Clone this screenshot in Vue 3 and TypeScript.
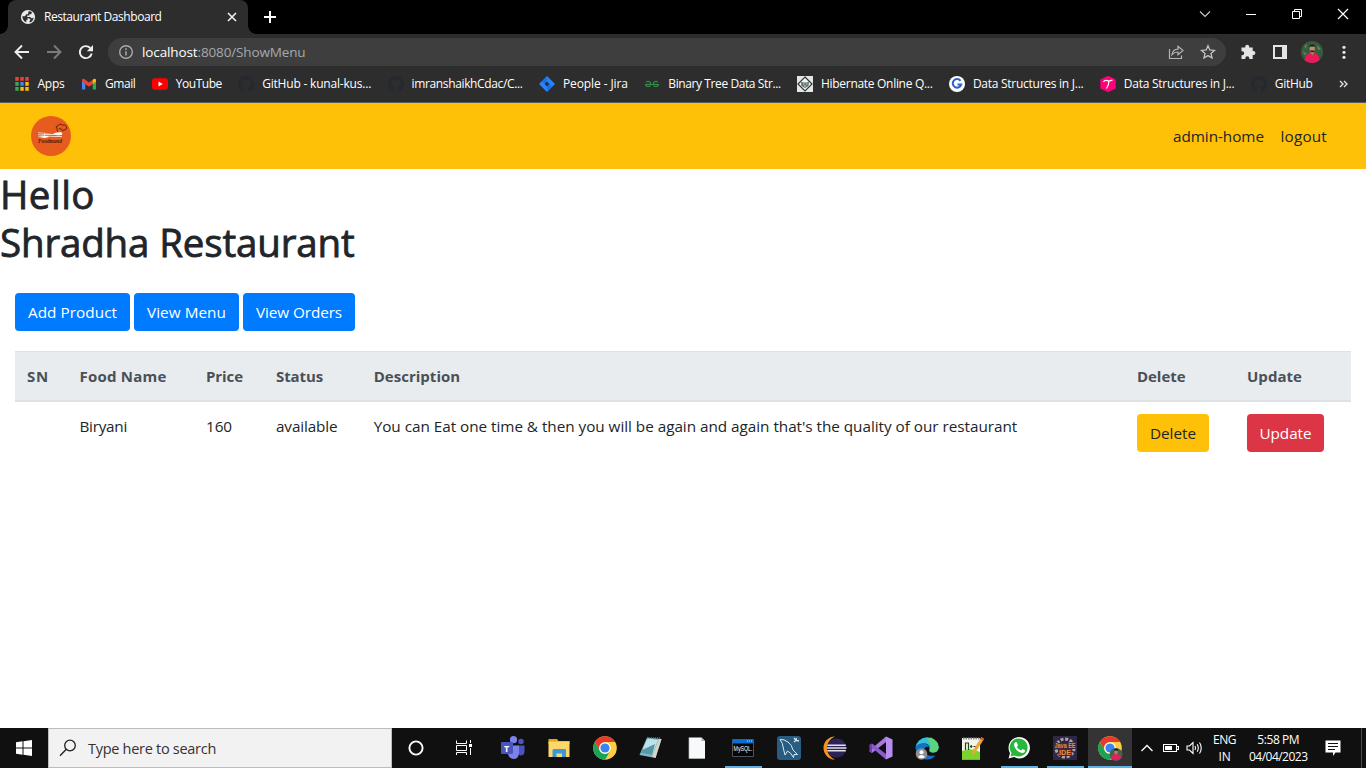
<script setup lang="ts">
interface Bookmark {
  icon: string
  label: string
  width: number
}

const bookmarks: Bookmark[] = [
  { icon: 'apps', label: 'Apps', width: 27 },
  { icon: 'gmail', label: 'Gmail', width: 30.5 },
  { icon: 'youtube', label: 'YouTube', width: 46 },
  { icon: 'github', label: 'GitHub - kunal-kus...', width: 109 },
  { icon: 'github', label: 'imranshaikhCdac/C...', width: 111 },
  { icon: 'jira', label: 'People - Jira', width: 65 },
  { icon: 'gfg', label: 'Binary Tree Data Str...', width: 112.3 },
  { icon: 'hibernate', label: 'Hibernate Online Q...', width: 111.5 },
  { icon: 'g', label: 'Data Structures in J...', width: 110.5 },
  { icon: 't', label: 'Data Structures in J...', width: 110.5 },
  { icon: 'github', label: 'GitHub', width: 38 },
]

const dots = [
  '#ea4335', '#ea4335', '#ea4335',
  '#34a853', '#4285f4', '#fbbc05',
  '#34a853', '#fbbc05', '#fbbc05',
]

const buttons = [
  { label: 'Add Product', width: 89 },
  { label: 'View Menu', width: 79 },
  { label: 'View Orders', width: 86 },
]

const columns = [
  { key: 'sn', label: 'SN', width: 22 },
  { key: 'name', label: 'Food Name', width: 87 },
  { key: 'price', label: 'Price', width: 37 },
  { key: 'status', label: 'Status', width: 47 },
  { key: 'desc', label: 'Description', width: 86.5 },
  { key: 'delete', label: 'Delete', width: 48.5 },
  { key: 'update', label: 'Update', width: 55 },
]

const apps = [
  'teams', 'explorer', 'chrome', 'notepad', 'file', 'mysql', 'workbench',
  'eclipse', 'vs', 'edge', 'npp', 'whatsapp', 'javaee', 'chromeuser',
]
const running = ['mysql', 'whatsapp', 'javaee', 'chromeuser']

// Spreads a label over the given width by adjusting its tracking.
const vFit = {
  mounted(el: HTMLElement, binding: { value: number }) {
    const count = (el.textContent ?? '').length
    const natural = el.getBoundingClientRect().width
    el.style.letterSpacing = `${(binding.value - natural) / count}px`
    el.style.width = `${binding.value}px`
  },
}
</script>

<template>
  <div class="screen">
    <div class="titlebar">
      <div class="tab">
        <svg class="globe" width="16" height="16" viewBox="0 0 16 16">
          <circle cx="8" cy="8" r="7.1" fill="#e8eaed" />
          <path d="M2.300 7.300 H5.200 L7.600 9.400 V11 H6.300 V13.300 Q2.500 12 2.300 7.300Z M8.600 2.300 Q11 2.200 12 3.500 L11 5.200 H9.300 V6.600 H7.200 V8 H10.200 L11.800 9.400 L13.600 8.500 Q13.400 12.200 10 13.500 L9.400 12.200 L10.600 10.800 L9 9.300 H7.600 L5 7.200 L6.200 5.200 H8Z" fill="#2d2d2d" />
        </svg>
        <span v-fit="117.5" class="t tab-title">Restaurant Dashboard</span>
        <svg class="tab-close" width="10" height="10" viewBox="0 0 10 10"><path d="M1 1 L9 9 M9 1 L1 9" stroke="#f1f1f1" stroke-width="1.6" /></svg>
        <i class="foot left"></i><i class="foot right"></i>
      </div>
      <svg class="newtab" width="12" height="12" viewBox="0 0 12 12"><path d="M6 0 V12 M0 6 H12" stroke="#fff" stroke-width="2" /></svg>
      <div class="winctl">
        <svg width="46" height="28" viewBox="0 0 46 28"><path d="M18 11.5 L23 16.5 L28 11.5" fill="none" stroke="#ccc" stroke-width="1.1" /></svg>
        <svg width="46" height="28" viewBox="0 0 46 28"><path d="M18 14.5 H28" stroke="#fff" /></svg>
        <svg width="46" height="28" viewBox="0 0 46 28"><path d="M18.5 11.5 H25.5 V18.5 H18.5Z M20.5 11 V9.5 H27.500 V16.5 H26" fill="none" stroke="#fff" /></svg>
        <svg width="46" height="28" viewBox="0 0 46 28"><path d="M18 9 L28 19 M28 9 L18 19" stroke="#fff" stroke-width="1.2" /></svg>
      </div>
    </div>

    <div class="toolbar">
      <svg class="nav" width="32" height="36" viewBox="0 0 32 36"><path d="M14 11.500 L7.500 18 L14 24.500 M8 18 H21" fill="none" stroke="#eee" stroke-width="1.9" transform="translate(8 0)" /></svg>
      <svg class="nav" width="32" height="36" viewBox="0 0 32 36"><path d="M14 11.500 L20.500 18 L14 24.500 M20 18 H7" fill="none" stroke="#7c7c7c" stroke-width="1.9" /></svg>
      <svg class="nav" width="32" height="36" viewBox="0 0 32 36"><path d="M18.200 14 A6 6 0 1 0 19.700 19.500" fill="none" stroke="#eee" stroke-width="1.9" /><path d="M21 11 V17.200 H14.800Z" fill="#eee" /></svg>
      <div class="omnibox">
        <svg class="info" width="16" height="16" viewBox="0 0 16 16"><circle cx="8" cy="8" r="6.300" fill="none" stroke="#a9abae" stroke-width="1.4" /><path d="M8 7.200 V11.500 M8 4.300 V5.900" stroke="#a9abae" stroke-width="1.5" /></svg>
        <span class="url"><span v-fit="55.5" class="t host">localhost</span><span v-fit="108" class="t path">:8080/ShowMenu</span></span>
        <svg class="share" width="16" height="16" viewBox="0 0 16 16"><path d="M1.500 5 V14.500 H13.500 V11.500" fill="none" stroke="#b5b5b5" stroke-width="1.2" /><path d="M4 10.600 C4.500 7.500 6.500 5.300 10 5.200 V2.200 L15 6.500 L10 10.700 V8 C7.500 8 5.500 8.900 4 10.600Z" fill="none" stroke="#b5b5b5" stroke-width="1.2" /></svg>
        <svg class="star" width="16" height="16" viewBox="0 0 16 16"><path d="M8 1.700 L9.800 6 L14.500 6.400 L11 9.500 L12 14 L8 11.600 L4 14 L5 9.500 L1.500 6.400 L6.200 6Z" fill="none" stroke="#c4c4c4" stroke-width="1.3" /></svg>
      </div>
      <svg class="ext" width="16" height="16" viewBox="0 0 16 16"><path d="M1.500 3.500 H5.200 V2.800 A2 2 0 0 1 9.200 2.800 V3.500 H12.700 V7 H13.400 A2 2 0 0 1 13.400 11 H12.700 V15 H9.300 V14.200 A2 2 0 0 0 5.300 14.200 V15 H1.500 V11.200 H2.200 A2 2 0 0 0 2.200 7.200 H1.500Z" fill="#e4e4e4" /></svg>
      <svg class="panel" width="16" height="16" viewBox="0 0 16 16"><path d="M1 1 H15 V15 H1Z M3 3 V13 H10 V3Z" fill="#e4e4e4" fill-rule="evenodd" /></svg>
      <svg class="avatar" width="22" height="22" viewBox="0 0 22 22">
        <circle cx="11" cy="11" r="11" fill="#355c3b" />
        <path d="M3 5 L6 3 L5 8Z M16 4 L20 8 L17 9Z M2 10 L6 13 L3 14Z" fill="#5c8560" />
        <path d="M3.500 19 C4.500 13.500 7 11.500 11 11.500 C15 11.500 17.700 13 18.500 19 C14.500 23 7.500 23 3.500 19Z" fill="#e91a5b" />
        <path d="M9.200 9 H13 V12 L11.500 14.500 L9.500 12Z" fill="#a8785d" /><ellipse cx="11.200" cy="7.500" rx="2.700" ry="3.600" fill="#b98b70" />
        <path d="M8 6.500 C8 2.500 14.500 2.500 14.300 6.500 L13.600 5.500 H9Z M9 9.500 H13.500 L12.500 11 H10Z" fill="#1b1718" />
      </svg>
      <svg class="dots" width="4" height="16" viewBox="0 0 4 16"><g fill="#e4e4e4"><circle cx="2" cy="3.300" r="1.600" /><circle cx="2" cy="8.300" r="1.600" /><circle cx="2" cy="13.300" r="1.600" /></g></svg>
    </div>

    <div class="bookmarks">
      <div v-for="(b, i) in bookmarks" :key="i" class="bookmark">
        <svg width="16" height="16" viewBox="0 0 16 16">
          <g v-if="b.icon === 'apps'">
            <rect v-for="(c, n) in dots" :key="n" :x="1.300 + (n % 3) * 5" :y="1 + Math.floor(n / 3) * 5" width="3.400" height="3.800" :fill="c" />
          </g>
          <g v-else-if="b.icon === 'gmail'">
            <path d="M1 5 V13.500 H4.300 V7Z" fill="#4285f4" /><path d="M15 5 V13.500 H11.700 V7Z" fill="#34a853" />
            <path d="M1 3.500 Q2.500 2 4.300 3.800 L8 6.600 L11.700 3.800 V7.900 L8 10.700 L4.300 7.900 L1 5.500Z" fill="#ea4335" /><path d="M11.700 3.800 Q13.500 2 15 3.500 V5.500 L11.700 7.900Z" fill="#fbbc04" />
          </g>
          <g v-else-if="b.icon === 'youtube'"><rect x="0" y="2.300" width="16" height="11.400" rx="2.700" fill="#f00" /><path d="M6.500 5.500 L10.700 8 L6.500 10.500Z" fill="#fff" /></g>
          <path v-else-if="b.icon === 'github'" fill="#24292f" d="M8 0C3.580 0 0 3.580 0 8c0 3.540 2.290 6.530 5.470 7.590.4.070.55-.17.55-.38v-1.490c-2.230.49-2.690-1.070-2.690-1.070-.36-.92-.89-1.170-.89-1.170-.73-.5.050-.49.050-.49.8.060 1.230.83 1.230.83.72 1.230 1.870.87 2.330.66.070-.52.280-.87.510-1.070-1.780-.2-3.640-.89-3.640-3.950 0-.87.31-1.590.82-2.150-.08-.2-.36-1.020.080-2.120 0 0 .67-.21 2.200.82A7.700 7.700 0 0 1 8 3.740c.68 0 1.360.09 2 .270 1.530-1.040 2.200-.82 2.200-.82.44 1.100.16 1.920.080 2.120.51.560.82 1.270.82 2.150 0 3.070-1.870 3.750-3.650 3.950.290.250.540.730.540 1.480v2.320c0 .21.150.46.550.38A8 8 0 0 0 16 8c0-4.420-3.580-8-8-8z" />
          <g v-else-if="b.icon === 'jira'"><path d="M8 0 L16 8 L8 16 L0 8Z" fill="#2684ff" /><path d="M8 1 L8 5.500 L5.500 8 L3 5.500Z" fill="#0052cc" opacity=".4" /><path d="M8 15 V10.500 L10.500 8 L13 10.500Z" fill="#0052cc" opacity=".4" /><path d="M8 5.600 L10.400 8 L8 10.400 L5.600 8Z" fill="#29303b" /></g>
          <g v-else-if="b.icon === 'gfg'" fill="none" stroke="#2f8d46" stroke-width="1.200"><path d="M2 6 Q5 4.600 6.500 6.800 V8.500 H1.500 Q2 11.300 6.500 10.200" /><path d="M14 6 Q11 4.600 9.500 6.800 V8.500 H14.500 Q14 11.300 9.500 10.200" /><path d="M1 8.500 H15" /></g>
          <g v-else-if="b.icon === 'hibernate'"><rect width="16" height="16" fill="#e5e5e5" /><path d="M8 1 L15 8 L8 15 L1 8Z" fill="#f3f3f3" stroke="#333" stroke-width="1.200" /><path d="M4 6 L7 6.500 H10 L12 5.500 L11.500 10 L8 12 L4.500 10Z" fill="#587264" /><path d="M6 8 H7.500 M9 8 H10.500 M7 10 H9" stroke="#d8e3d8" /></g>
          <g v-else-if="b.icon === 'g'"><circle cx="8" cy="8" r="8" fill="#fff" /><path d="M11.500 4.800 A4.300 4.300 0 1 0 12.200 8.500 H8.500" fill="none" stroke="#2e62cf" stroke-width="2.100" /></g>
          <g v-else><path d="M8 -.3 L15.700 3.500 V12.500 L8 16.300 L.3 12.500 V3.500Z" fill="#ff0078" /><path d="M3.500 6 Q4.500 4 7 4.600 Q10 5.300 12.500 4 M9 5 Q8.800 9 6.500 12.500" fill="none" stroke="#fff" stroke-width="1.200" /></g>
        </svg>
        <span v-fit="b.width" class="t">{{ b.label }}</span>
      </div>
      <svg class="more" width="9" height="8" viewBox="0 0 9 8"><path d="M1 1 L4 4 L1 7 M5 1 L8 4 L5 7" fill="none" stroke="#e0e0e0" stroke-width="1.400" /></svg>
    </div>

    <main class="page">
      <header class="navbar">
        <svg class="brand" width="40" height="40" viewBox="0 0 40 40">
          <circle cx="20" cy="20" r="20" fill="#e85b1f" />
          <path d="M7 16.500 L14 17.300 M7 18.300 L14 18.500 M7 20.200 L14 19.500" stroke="#e5cfc5" stroke-width=".8" />
          <path d="M13 17.500 L22 18 Q25 15.800 30 16.300 Q32.500 17.500 30.500 19 Q26 19.500 22 18.800 L13 18.700Z M31 20.300 V21 L18 20.500 Q15 22.800 11 21.500 L7 21 L14 19.700Z" fill="#fff" />
          <path d="M26.500 15.500 L26 12.500 Q23.500 10.500 27 9.500 Q29 6.800 31.500 9 Q36 8.500 35.500 12 Q35.500 14.500 32 14 L31 15.500 M28 12.500 L31 13.500" fill="none" stroke="#50200c" stroke-width=".9" />
          <text x="7" y="26.500" textLength="24" lengthAdjust="spacingAndGlyphs" class="brand-name">Foodmand</text>
        </svg>
        <nav><a v-fit="91">admin-home</a><a v-fit="46.500">logout</a></nav>
      </header>
      <h1><span v-fit="95" class="t">Hello</span><br><span v-fit="354.500" class="t">Shradha Restaurant</span></h1>
      <section class="content">
        <div class="actions">
          <button v-for="b in buttons" :key="b.label" class="btn primary"><span v-fit="b.width" class="t">{{ b.label }}</span></button>
        </div>
        <table>
          <thead>
            <tr><th v-for="c in columns" :key="c.key" :class="c.key"><span v-fit="c.width" class="t">{{ c.label }}</span></th></tr>
          </thead>
          <tbody>
            <tr>
              <td></td>
              <td><span v-fit="47.500" class="t">Biryani</span></td>
              <td><span v-fit="26" class="t">160</span></td>
              <td><span v-fit="61.500" class="t">available</span></td>
              <td><span v-fit="643.500" class="t">You can Eat one time &amp; then you will be again and again that's the quality of our restaurant</span></td>
              <td><button class="btn warning"><span v-fit="46" class="t">Delete</span></button></td>
              <td><button class="btn danger"><span v-fit="52" class="t">Update</span></button></td>
            </tr>
          </tbody>
        </table>
      </section>
    </main>

    <footer class="taskbar">
      <div class="start"><svg width="16" height="16" viewBox="0 0 16 16"><path d="M0 2.200 L6.500 1.300 V7.500 H0Z M7.500 1.150 L16 0 V7.500 H7.500Z M0 8.500 H6.500 V14.700 L0 13.800Z M7.500 8.500 H16 V16 L7.500 14.850Z" fill="#fff" /></svg></div>
      <div class="search">
        <svg width="18" height="18" viewBox="0 0 18 18"><circle cx="11" cy="6.500" r="5.300" fill="none" stroke="#222" stroke-width="1.300" /><path d="M7.300 10.300 L1 16.700" stroke="#222" stroke-width="1.400" /></svg>
        <span v-fit="128" class="t">Type here to search</span>
      </div>
      <div class="sys"><svg width="16" height="16" viewBox="0 0 16 16"><circle cx="8" cy="8" r="6.600" fill="none" stroke="#fff" stroke-width="1.900" /></svg></div>
      <div class="sys"><svg width="18" height="18" viewBox="0 0 18 18"><path d="M1.500 1.500 V4.500 H11.500 V1.500 M1.500 16 V13.500 H11.500 V16 M1.500 6.500 H11.500 V11.500 H1.500Z M15.500 1 V4 M15.500 9 V16" fill="none" stroke="#fff" /><rect x="14" y="5" width="3" height="3" fill="#fff" /></svg></div>
      <div class="apps">
        <div v-for="a in apps" :key="a" class="app" :class="{ running: running.includes(a), active: a === 'chromeuser' }">
          <svg width="26" height="26" viewBox="0 0 26 26">
            <g v-if="a === 'teams'">
              <circle cx="21" cy="6.500" r="2.800" fill="#4b53bc" /><circle cx="13.500" cy="4.700" r="3.600" fill="#7b83eb" />
              <path d="M18 10.500 H24.500 V17 Q24 20.500 20.500 20.500 L18 19Z" fill="#4b53bc" /><path d="M8 10.500 H19 V18 Q18.500 24 13.500 24 Q9 23.500 8 19Z" fill="#7b83eb" />
              <rect x="1" y="7" width="12" height="12" rx="1" fill="#4b53bc" /><text x="4" y="16.500" class="tlogo">T</text>
            </g>
            <g v-else-if="a === 'explorer'"><path d="M2.500 4 H11 L12.500 6 H23.500 V9 H2.500Z" fill="#e7a515" /><rect x="2.500" y="6.500" width="21" height="15.500" fill="#ffd766" /><path d="M6.500 22 V15.500 Q6.500 14 8 14 H19 Q20 14 20 15.500 V22 H16 V18.500 H10.500 V22Z" fill="#3899dd" /></g>
            <g v-else-if="a === 'chrome' || a === 'chromeuser'">
              <circle cx="13" cy="13" r="11.800" fill="#ffcd40" /><path d="M2.800 7 A11.800 11.800 0 0 1 23.200 7.100 H13 A6 6 0 0 0 7.800 16Z" fill="#e8392d" /><path d="M2.800 7 A11.800 11.800 0 0 0 13 24.800 L18.200 16 A6 6 0 0 1 7.800 16Z" fill="#1aa358" />
              <circle cx="13" cy="13" r="5.800" fill="#fff" /><circle cx="13" cy="13" r="4.600" fill="#3b83ef" />
              <g v-if="a === 'chromeuser'"><circle cx="19" cy="19.500" r="6.500" fill="#3d6645" /><path d="M13.500 23 Q14.500 19 19 19 Q23.500 19 24.500 22.500 Q20 28 13.500 23Z" fill="#e71e5e" /><ellipse cx="19" cy="17" rx="1.900" ry="2.400" fill="#a9806a" /><path d="M16.900 16.500 Q17 13.500 19 13.500 Q21.500 13.500 21.100 16.500 L20.500 15.600 H17.500Z" fill="#1b1718" /></g>
            </g>
            <g v-else-if="a === 'notepad'"><path d="M9 2.500 L23.500 4 L17.500 23 L1.500 20Z" fill="#7fb8c4" /><path d="M9.500 3.500 L20 5 L14 20 L3 18Z" fill="#bce3e8" /><path d="M4 15 L17 9 L14 20 L3 18Z" fill="#5796a7" /><path d="M21 4 L23.500 4 L17.500 23 L14 21.500Z" fill="#d8d5c4" /><path d="M9 3 H23" stroke="#6c7476" stroke-width="1.500" stroke-dasharray="1 1" /></g>
            <g v-else-if="a === 'file'"><path d="M5 2.500 H17.500 L21 6 V23.500 H5Z" fill="#f7f9fa" /><path d="M17.500 2.500 L21 6 H17.500Z" fill="#abb0b3" /><path d="M5 2.500 V23.500 H21" fill="none" stroke="#b9bdbf" stroke-width=".7" /></g>
            <g v-else-if="a === 'mysql'"><rect x="2" y="4" width="22" height="18" rx="1" fill="#4c5257" /><rect x="2.500" y="4.500" width="21" height="4" fill="#0a6ed4" /><rect x="3" y="8.500" width="20" height="12.500" fill="#050505" /><path d="M17 6 H22" stroke="#b9dcff" stroke-dasharray="1 1" /><text x="3.500" y="15.500" textLength="19" lengthAdjust="spacingAndGlyphs" class="mysql-label">MySQL.</text></g>
            <g v-else-if="a === 'workbench'"><rect x="1" y="1" width="24" height="24" rx="3" fill="#285c81" /><path d="M4 4.500 Q8 4 12 7 Q16 10 17 15 L21.500 19.500 L18 19.500 L17.500 22.500 Q15 17.500 11.500 16 L9 20 L7.500 14 Q7 8 4 4.500Z" fill="none" stroke="#dbe9f2" stroke-width="1" /><path d="M18 3 L20 5.500 L23 6 M20.500 3 L20 5.500 L18 7" fill="none" stroke="#d8e5ed" stroke-width="1.300" /></g>
            <g v-else-if="a === 'eclipse'"><path d="M13 1.500 A11.500 11.500 0 0 0 13 24.500 A12.500 12.500 0 0 1 13 1.500Z" fill="#f7941e" /><circle cx="14.500" cy="13" r="9.800" fill="#2c2255" /><path d="M5.300 10.200 H23.800 M4.700 13 H24.500 M5.300 15.800 H23.800" stroke="#e2dfea" stroke-width="1.500" /></g>
            <g v-else-if="a === 'vs'"><path d="M18 1.500 L24.500 4.500 V21.500 L18 24.500Z" fill="#b78df0" /><path d="M18 1.500 V7 L4 18 L1.500 16.500 V15.500Z" fill="#a779dc" /><path d="M1.500 10 L4 8.500 L18 19 V24.500 L1.500 10.800Z" fill="#8c5ad0" /><path d="M1.500 10 L4 8.500 V17.800 L1.500 16.500Z" fill="#7240b5" /></g>
            <g v-else-if="a === 'edge'"><path d="M1.500 13 A11.700 11.700 0 0 1 24.700 12 Q24.500 17.500 18.500 17.500 Q14.500 17 15.500 14 Q16 9 11 8.500 Q4 8.500 1.500 13Z" fill="#35c1d5" /><path d="M17 2.500 Q24.500 6 24.700 12 Q24.500 17.500 18.500 17.500 Q15 17 15.500 15 Q18.500 9 13 4Z" fill="#5ed37c" /><path d="M1.500 13 A8 8 0 0 1 15.500 12 Q10 11 10 16 Q11 22 21.500 20.500 Q17 26 10 24 Q2 21 1.500 13Z" fill="#1470c4" /><circle cx="7.500" cy="19" r="5.800" fill="#8f8f8f" /><circle cx="7.500" cy="17.200" r="2" fill="#fff" /><path d="M4 22 Q7.500 18 11 22 Q7.500 24.500 4 22Z" fill="#fff" /></g>
            <g v-else-if="a === 'npp'"><rect x="2" y="3" width="18" height="21.500" fill="#f3f5ea" /><path d="M2 16 Q11 12 20 17 V24.500 H2Z" fill="#79d42c" /><path d="M3 3.500 H20" stroke="#888" stroke-width="2" stroke-dasharray="1.500 1" /><path d="M5.500 15 V8 H8.500 V15 M10 11.500 H12.500 M13.500 11.500 H16 M11.200 10 V13" fill="none" stroke="#27421d" stroke-width="1.200" /><path d="M21.500 2 L24 4 L15 18 L12 20 L12.500 16Z" fill="#e9a83a" /><path d="M21.500 2 L24 4 L23 5.500 L20.500 4Z" fill="#d65251" /></g>
            <g v-else-if="a === 'whatsapp'"><path d="M2.500 23.500 L4 18.200 A10.700 10.700 0 1 1 8 22.100Z" fill="#fff" /><path d="M4.500 21.500 L5.500 18 A9 9 0 1 1 8.500 20.500Z" fill="#29b83e" /><path d="M9 7.500 Q10.500 6.500 11 8 L12 10.300 L10.800 12 Q12.500 15 15 15.500 L16.500 14 L19 15.200 Q19.500 17 17 18 Q14 18.500 10.500 15 Q6.500 10 9 7.500Z" fill="#fff" /></g>
            <g v-else><rect x="1" y="1" width="24" height="24" fill="#302746" /><circle cx="13" cy="13" r="9" fill="none" stroke="#b0a4aa" stroke-width="3" stroke-dasharray="3 1.700" /><text x="2.500" y="12.500" textLength="21" lengthAdjust="spacingAndGlyphs" class="java-label">Java EE</text><text x="7" y="19.800" textLength="12" lengthAdjust="spacingAndGlyphs" class="java-label">IDE</text></g>
          </svg>
        </div>
      </div>
      <div class="tray">
        <svg class="chev" width="14" height="8" viewBox="0 0 14 8"><path d="M1.500 7 L7 1.500 L12.500 7" fill="none" stroke="#fff" stroke-width="1.300" /></svg>
        <svg class="batt" width="16" height="10" viewBox="0 0 16 10"><path d="M.5 1.500 H13.500 V8.500 H.5Z M14 3.500 H15.500 V6.500 H14" fill="none" stroke="#fff" stroke-width="1.100" /><rect x="2" y="3" width="7" height="4" fill="#fff" /></svg>
        <svg class="vol" width="18" height="14" viewBox="0 0 18 14"><path d="M1 5 H3.500 L7 1.500 V12.500 L3.500 9 H1Z M9 5 Q10.200 7 9 9 M11.200 3.300 Q13.400 7 11.200 10.700 M13.500 1.500 Q17 7 13.500 12.500" fill="none" stroke="#fff" stroke-width="1.100" /></svg>
        <div class="lang"><span v-fit="23" class="t">ENG</span><span v-fit="12" class="t">IN</span></div>
        <div class="clock"><span v-fit="42" class="t">5:58 PM</span><span v-fit="58.500" class="t">04/04/2023</span></div>
        <svg class="note" width="16" height="17" viewBox="0 0 16 17"><path d="M.5 .5 H15.500 V12.500 H10.500 L8 16 V12.500 H.5Z" fill="#fff" /><path d="M3 3.500 H13 M3 6.500 H13 M3 9.500 H10" stroke="#111" /></svg>
      </div>
    </footer>
  </div>
</template>

<style>
body { margin: 0; overflow: hidden; }
</style>

<style scoped>
.screen { width: 1366px; height: 768px; display: flex; flex-direction: column; overflow: hidden; background: #fff; font-family: "Open Sans", "Noto Sans", sans-serif; }
.screen * { box-sizing: border-box; }
.t { display: inline-block; white-space: nowrap; }
svg { display: block; flex: none; }

.titlebar { height: 34px; background: #000; display: flex; align-items: center; flex: none; }
.tab { position: relative; width: 240px; height: 34px; margin-left: 8px; background: #2d2d2d; border-radius: 8px 8px 0 0; display: flex; align-items: center; color: #fff; font-size: 12px; }
.globe { margin-left: 12px; }
.tab-title { margin: 0 0 2px 8px; }
.tab-close { margin-left: auto; margin-right: 11px; }
.foot { position: absolute; bottom: 0; width: 8px; height: 8px; }
.foot.left { left: -8px; background: radial-gradient(circle at 0 0, #000 7.500px, #2d2d2d 8px); }
.foot.right { right: -8px; background: radial-gradient(circle at 100% 0, #000 7.500px, #2d2d2d 8px); }
.newtab { margin-left: 16px; }
.winctl { margin-left: auto; display: flex; align-self: flex-start; }

.toolbar { height: 36px; background: #2d2d2d; display: flex; align-items: center; flex: none; }
.nav + .nav { margin-left: 8px; }
.nav + .nav + .nav { margin-left: 0; }
.omnibox { margin-left: 4px; width: 1118px; height: 28px; border-radius: 14px; background: #3e3e3e; display: flex; align-items: center; font-size: 13.500px; }
.info { margin-left: 10px; }
.url { margin-left: 8px; display: flex; }
.host { color: #fff; }
.path { color: #a6a8ab; }
.share { margin-left: auto; }
.star { margin: 0 10px 0 16px; }
.ext { margin-left: 14px; }
.panel { margin-left: 16px; }
.avatar { margin-left: 13px; }
.dots { margin-left: 19px; }

.bookmarks { height: 33px; flex: none; background: #2d2d2d; border-bottom: 1px solid #5b5b5b; padding: 0 0 4px 13.500px; display: flex; align-items: center; gap: 16.400px; color: #fff; font-size: 12px; }
.bookmark { display: flex; align-items: center; gap: 8px; }
.bookmark .t { margin-bottom: 2px; }
.more { margin-left: 10px; }

.page { height: 625px; flex: none; color: #212529; font-size: 15.300px; line-height: 24px; }
.navbar { height: 66px; background: #ffc107; display: flex; align-items: center; justify-content: space-between; padding: 0 39px 0 31px; }
.brand-name { font: italic bold 6px "Liberation Serif", serif; fill: #4b1a08; }
.navbar nav { display: flex; gap: 16.500px; }
.navbar a { display: inline-block; white-space: nowrap; color: #212529; }
h1 { margin: 0; height: 104px; padding-top: 1px; font-size: 38.500px; line-height: 48px; font-weight: 400; -webkit-text-stroke: .8px #212529; }
.content { padding: 20px 15px; }
.actions { display: flex; gap: 4px; margin-bottom: 20px; }
.btn { height: 38px; border: 0; border-radius: 4px; padding: 0 13px; font: inherit; display: flex; align-items: center; }
.primary { background: #007bff; color: #fff; }
.warning { background: #ffc107; color: #212529; }
.danger { background: #dc3545; color: #fff; padding: 0 12.500px; }
table { width: 1336px; table-layout: fixed; border-collapse: separate; border-spacing: 0; }
th, td { padding: 12px; text-align: left; vertical-align: top; }
th { height: 51px; background: #e9ecef; color: #495057; border-top: 1px solid #dee2e6; border-bottom: 2px solid #dee2e6; font-size: 15px; font-weight: 700; }
th .t, td .t { vertical-align: top; }
.sn { width: 52.500px; }
.name { width: 126.500px; }
.price { width: 70px; }
.status { width: 97.700px; }
.desc { width: 763.300px; }
.delete { width: 110px; }

.taskbar { height: 40px; flex: none; background: #101010; color: #fff; display: flex; }
.start { width: 48px; display: flex; align-items: center; justify-content: center; }
.search { width: 344px; background: #f2f2f2; border: 1px solid #bcbcbc; display: flex; align-items: center; gap: 11px; padding-left: 10px; color: #333; font-size: 14.500px; }
.sys { width: 48px; display: flex; align-items: center; justify-content: center; }
.apps { display: flex; margin-left: 2px; }
.app { width: 46px; display: flex; align-items: center; justify-content: center; }
.running { background: linear-gradient(#5fb2e6, #5fb2e6) 50% 100% / 37px 2px no-repeat; }
.active { width: 44px; background: linear-gradient(#5fb2e6, #5fb2e6) 50% 100% / 44px 2px no-repeat #343434; }
.tlogo { font: bold 9px "Open Sans", sans-serif; fill: #fff; }
.mysql-label { font: 6.500px "Liberation Sans", sans-serif; fill: #fff; }
.java-label { font: bold 7px "Liberation Sans", sans-serif; fill: #f08c32; stroke: #392a42; stroke-width: 2px; paint-order: stroke; }
.tray { flex: 1; display: flex; align-items: center; border-right: 1px solid #4b4b4b; margin-right: 4px; font-size: 12px; line-height: 17px; }
.chev { margin-left: 8px; }
.batt { margin-left: 9px; }
.vol { margin-left: 7px; }
.lang, .clock { display: flex; flex-direction: column; align-items: center; padding-bottom: 1px; }
.lang { margin-left: 9px; }
.clock { margin-left: 13px; }
.note { margin-left: 17px; }
</style>
